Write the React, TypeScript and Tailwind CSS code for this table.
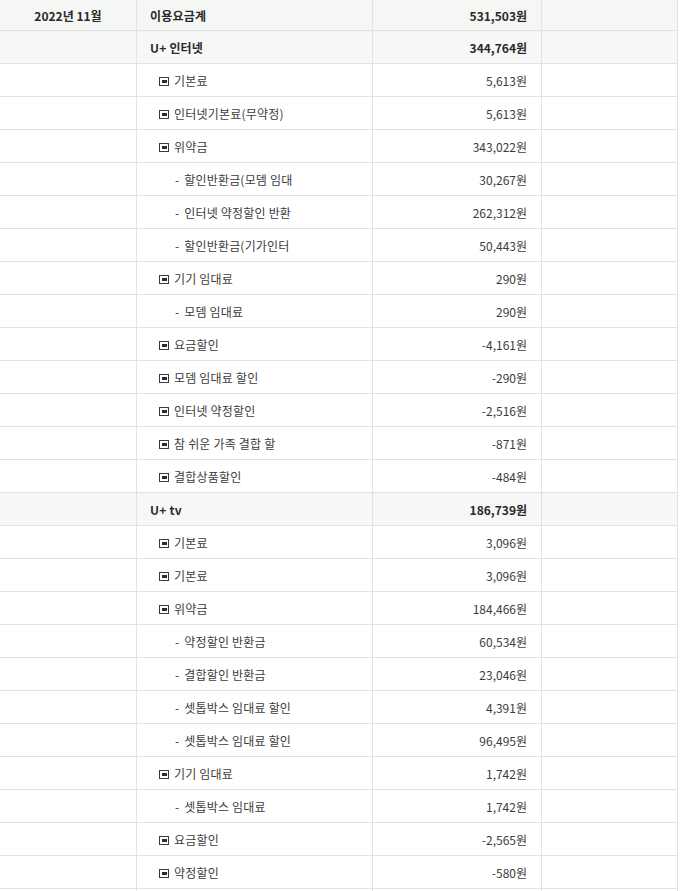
import React from "react";

type Row = {
  label: string;
  amount: string;
  kind: "total" | "section" | "item" | "sub";
  month?: string;
};

const rows: Row[] = [
  { label: "이용요금계", amount: "531,503원", kind: "total", month: "2022년 11월" },
  { label: "U+ 인터넷", amount: "344,764원", kind: "section" },
  { label: "기본료", amount: "5,613원", kind: "item" },
  { label: "인터넷기본료(무약정)", amount: "5,613원", kind: "item" },
  { label: "위약금", amount: "343,022원", kind: "item" },
  { label: "할인반환금(모뎀 임대", amount: "30,267원", kind: "sub" },
  { label: "인터넷 약정할인 반환", amount: "262,312원", kind: "sub" },
  { label: "할인반환금(기가인터", amount: "50,443원", kind: "sub" },
  { label: "기기 임대료", amount: "290원", kind: "item" },
  { label: "모뎀 임대료", amount: "290원", kind: "sub" },
  { label: "요금할인", amount: "-4,161원", kind: "item" },
  { label: "모뎀 임대료 할인", amount: "-290원", kind: "item" },
  { label: "인터넷 약정할인", amount: "-2,516원", kind: "item" },
  { label: "참 쉬운 가족 결합 할", amount: "-871원", kind: "item" },
  { label: "결합상품할인", amount: "-484원", kind: "item" },
  { label: "U+ tv", amount: "186,739원", kind: "section" },
  { label: "기본료", amount: "3,096원", kind: "item" },
  { label: "기본료", amount: "3,096원", kind: "item" },
  { label: "위약금", amount: "184,466원", kind: "item" },
  { label: "약정할인 반환금", amount: "60,534원", kind: "sub" },
  { label: "결합할인 반환금", amount: "23,046원", kind: "sub" },
  { label: "셋톱박스 임대료 할인", amount: "4,391원", kind: "sub" },
  { label: "셋톱박스 임대료 할인", amount: "96,495원", kind: "sub" },
  { label: "기기 임대료", amount: "1,742원", kind: "item" },
  { label: "셋톱박스 임대료", amount: "1,742원", kind: "sub" },
  { label: "요금할인", amount: "-2,565원", kind: "item" },
  { label: "약정할인", amount: "-580원", kind: "item" },
  { label: "", amount: "", kind: "item" },
];

const BoxIcon = () => (
  <span className="inline-flex h-[9px] w-[10px] items-center justify-center border border-[#3a3a3a] bg-white">
    <span className="block h-[3px] w-[5px] bg-[#2a2a2a]" />
  </span>
);

const App: React.FC = () => {
  return (
    <div
      className="w-[681px] h-[891px] overflow-hidden bg-white text-[12px] text-[#3c3c3c]"
      style={{ fontFamily: '"Noto Sans CJK KR", "Noto Sans", sans-serif' }}
    >
      <div className="w-[678px] border-r border-[#e2e2e2]">
        {rows.map((row, i) => {
          const isHead = row.kind === "total" || row.kind === "section";
          const bg =
            row.kind === "total"
              ? "bg-[#f5f7f4]"
              : row.kind === "section"
              ? "bg-[#f7f7f7]"
              : "bg-white";
          return (
            <div
              key={i}
              className={`grid grid-cols-[137px_236px_169px_135px] border-b border-[#e2e2e2] ${bg} ${
                i === 0 ? "h-[31px]" : "h-[33px]"
              }`}
            >
              <div className="flex items-center justify-center border-r border-[#e2e2e2] pt-[1px] font-semibold text-[#2a2a2a]">
                {row.month}
              </div>
              <div
                className={`flex items-center border-r border-[#e2e2e2] pt-[2px] ${
                  isHead ? "pl-[13px] font-semibold text-[#2a2a2a]" : ""
                } ${row.kind === "item" ? "pl-[22px]" : ""} ${
                  row.kind === "sub" ? "pl-[38px]" : ""
                }`}
              >
                {row.kind === "item" && row.label && (
                  <span className="mr-[5px] flex items-center">
                    <BoxIcon />
                  </span>
                )}
                {row.kind === "sub" && <span className="mr-[5px]">-</span>}
                <span className="tracking-[0.2px]">{row.label}</span>
              </div>
              <div
                className={`flex items-center justify-end border-r border-[#e2e2e2] pr-[14px] pt-[2px] ${
                  isHead ? "font-semibold text-[#2a2a2a]" : ""
                }`}
              >
                {row.amount}
              </div>
              <div />
            </div>
          );
        })}
      </div>
    </div>
  );
};

export default App;
